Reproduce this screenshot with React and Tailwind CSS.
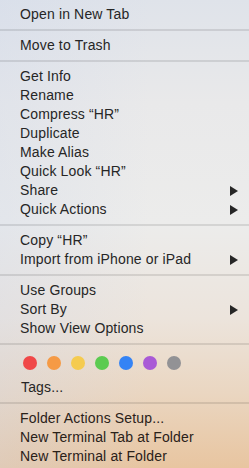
const groups = [
    [{ label: "Open in New Tab" }],
    [{ label: "Move to Trash" }],
    [
        { label: "Get Info" },
        { label: "Rename" },
        { label: "Compress “HR”" },
        { label: "Duplicate" },
        { label: "Make Alias" },
        { label: "Quick Look “HR”" },
        { label: "Share", sub: true },
        { label: "Quick Actions", sub: true },
    ],
    [
        { label: "Copy “HR”" },
        { label: "Import from iPhone or iPad", sub: true },
    ],
    [
        { label: "Use Groups" },
        { label: "Sort By", sub: true },
        { label: "Show View Options" },
    ],
];

const tagColors = [
    "bg-[#f04848]",
    "bg-[#f59a45]",
    "bg-[#f5cb4f]",
    "bg-[#5ccb50]",
    "bg-[#3483f5]",
    "bg-[#a95ad6]",
    "bg-[#929295]",
];

function Arrow() {
    return (
        <svg width="8" height="10" viewBox="0 0 8 10" className="mr-[11px]">
            <path d="M0 0 L8 5 L0 10 Z" fill="#262626" />
        </svg>
    );
}

function Item({ label, sub }) {
    return (
        <div className="h-[19px] pl-[20px] flex items-center justify-between leading-[19px]">
            <span>{label}</span>
            {sub && <Arrow />}
        </div>
    );
}

function Separator() {
    return <div className="my-[5px] h-[2px] bg-black/[0.1]" />;
}

export default function App() {
    return (
        <div
            className="relative w-[249px] h-[468px] overflow-hidden text-[14px] tracking-[0.15px] text-[#262626] bg-[linear-gradient(180deg,#dfe3ea_0%,#e9e9ea_22%,#ececeb_48%,#ece4dc_68%,#ead6c1_84%,#e8c5a0_100%)]"
            style={{ fontFamily: '"Liberation Sans", Arial, sans-serif' }}
        >
            <div className="absolute inset-0 bg-[linear-gradient(90deg,rgba(205,215,235,0.3)_0%,rgba(255,255,255,0)_60%)] pointer-events-none" />
            <div className="relative pt-[5px]">
                {groups.map((group, i) => (
                    <div key={i}>
                        {group.map((item) => (
                            <Item key={item.label} {...item} />
                        ))}
                        <Separator />
                    </div>
                ))}
                <div className="flex gap-[10px] pl-[23px] pt-[6px]">
                    {tagColors.map((c) => (
                        <div key={c} className={`w-[14px] h-[14px] rounded-full ${c}`} />
                    ))}
                </div>
                <div className="mt-[8px] h-[19px] pl-[21px] leading-[19px]">Tags...</div>
                <Separator />
                <div className="text-[#2a2119]">
                    <Item label="Folder Actions Setup..." />
                    <Item label="New Terminal Tab at Folder" />
                    <Item label="New Terminal at Folder" />
                </div>
            </div>
        </div>
    );
}
